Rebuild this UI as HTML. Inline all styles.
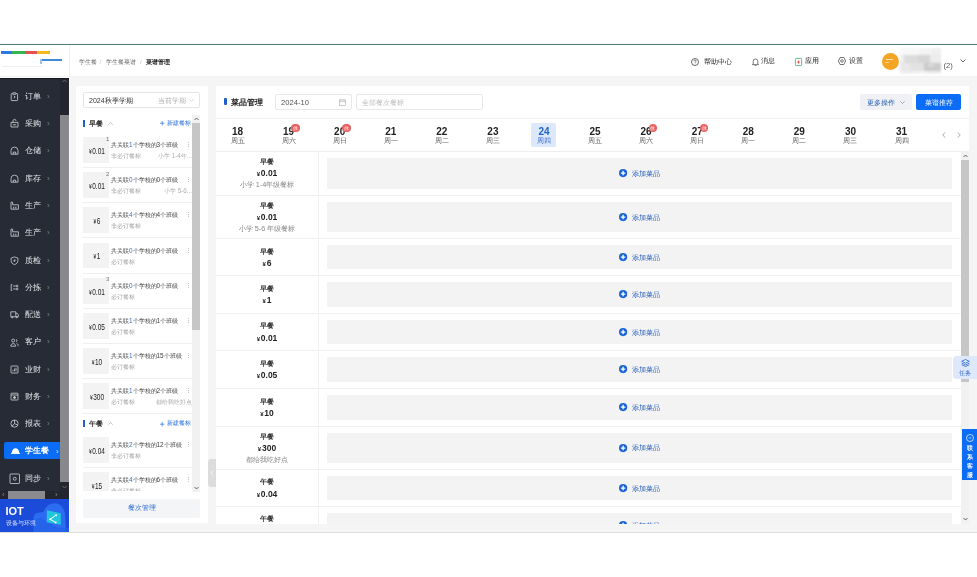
<!DOCTYPE html><html><head><meta charset="utf-8"><style>
html,body{margin:0;padding:0;}
body{width:977px;height:577px;overflow:hidden;position:relative;background:#fff;font-family:"Liberation Sans",sans-serif;}
div{box-sizing:border-box;}
svg{position:absolute;display:block;overflow:visible}
</style></head><body><div style="position:absolute;left:0;top:0;width:977px;height:577px;will-change:transform">
<div style="position:absolute;left:0px;top:44px;width:977px;height:1px;background:#587d71"></div>
<div style="position:absolute;left:0px;top:45px;width:977px;height:32px;background:#fff"></div>
<div style="position:absolute;left:69px;top:45px;width:1px;height:32px;background:#f0f0f0"></div>
<div style="position:absolute;left:0px;top:76px;width:977px;height:1px;background:#f2f2f2"></div>
<div style="position:absolute;left:1px;top:51px;width:11px;height:3px;background:#2a7ae2"></div>
<div style="position:absolute;left:12px;top:51px;width:13px;height:3px;background:#33b552"></div>
<div style="position:absolute;left:25px;top:51px;width:12px;height:3px;background:#e65050"></div>
<div style="position:absolute;left:37px;top:51px;width:13px;height:3px;background:#f2b823"></div>
<div style="position:absolute;left:40px;top:59px;width:22px;height:1.5px;background:#3f8ad8"></div>
<div style="position:absolute;left:40px;top:59px;width:1.5px;height:5px;background:#9cc3ea"></div>
<div style="position:absolute;left:2px;top:66px;width:40px;height:1px;background:#f0f0f0"></div>
<div style="position:absolute;left:79px;top:57.73px;line-height:8.54px;font-size:6.1px;color:#6e6e6e;font-weight:normal;white-space:nowrap;">学生餐</div>
<div style="position:absolute;left:99.5px;top:57.73px;line-height:8.54px;font-size:6.1px;color:#bdbdbd;font-weight:normal;white-space:nowrap;">/</div>
<div style="position:absolute;left:106.4px;top:57.73px;line-height:8.54px;font-size:6.1px;color:#6e6e6e;font-weight:normal;white-space:nowrap;">学生餐菜谱</div>
<div style="position:absolute;left:140px;top:57.73px;line-height:8.54px;font-size:6.1px;color:#bdbdbd;font-weight:normal;white-space:nowrap;">/</div>
<div style="position:absolute;left:145.7px;top:57.73px;line-height:8.54px;font-size:6.1px;color:#1a1a1a;font-weight:bold;white-space:nowrap;">菜谱管理</div>
<svg style="left:691px;top:57.5px" width="8" height="8" viewBox="0 0 8 8"><circle cx="4" cy="4" r="3.5" fill="none" stroke="#444" stroke-width="0.8"/><path d="M2.9 3.1a1.1 1.1 0 1 1 1.5 1c-.3.1-.4.3-.4.6" fill="none" stroke="#444" stroke-width="0.7"/><circle cx="4" cy="5.8" r="0.4" fill="#444"/></svg>
<div style="position:absolute;left:703.5px;top:56.67px;line-height:9.66px;font-size:6.9px;color:#222;font-weight:normal;white-space:nowrap;">帮助中心</div>
<svg style="left:751.5px;top:57.5px" width="7" height="8" viewBox="0 0 7 8"><path d="M1.2 6V3.3a2.3 2.3 0 0 1 4.6 0V6l.8.6H.4z" fill="none" stroke="#444" stroke-width="0.7" stroke-linejoin="round"/><path d="M2.6 7.5h1.8" stroke="#444" stroke-width="0.7"/></svg>
<div style="position:absolute;left:761px;top:56.46px;line-height:10.08px;font-size:7.2px;color:#222;font-weight:normal;white-space:nowrap;">消息</div>
<svg style="left:794.5px;top:57.5px" width="7" height="8" viewBox="0 0 7 8"><rect x="0.4" y="0.4" width="6.2" height="7.2" rx="0.8" fill="none" stroke="#3aa57a" stroke-width="0.8"/><path d="M3.5 2.5v3.2M1.9 4.1h3.2" stroke="#e0463a" stroke-width="0.8"/></svg>
<div style="position:absolute;left:805.3px;top:56.53px;line-height:9.94px;font-size:7.1px;color:#222;font-weight:normal;white-space:nowrap;">应用</div>
<svg style="left:838.3px;top:57.2px" width="8" height="8" viewBox="0 0 8 8"><path d="M2.1 0.5H5.9L7.6 4 5.9 7.5H2.1L0.4 4z" fill="none" stroke="#444" stroke-width="0.75" stroke-linejoin="round"/><circle cx="4" cy="4" r="1.3" fill="none" stroke="#444" stroke-width="0.7"/></svg>
<div style="position:absolute;left:849px;top:56.46px;line-height:10.08px;font-size:7.2px;color:#222;font-weight:normal;white-space:nowrap;">设置</div>
<div style="position:absolute;left:881.5px;top:53px;width:17px;height:17px;background:#f5a524;border-radius:50%"></div>
<div style="position:absolute;left:886px;top:58.5px;width:7px;height:1px;background:#fde3b0"></div>
<div style="position:absolute;left:885px;top:62px;width:4px;height:1px;background:#fbd08a"></div>
<div style="position:absolute;left:0;top:0;width:977px;height:80px;filter:blur(1.2px)">
<div style="position:absolute;left:899.5px;top:48px;width:41.5px;height:25.5px;background:#efefef"></div>
<div style="position:absolute;left:899.5px;top:48px;width:20px;height:7px;background:#f7f7f7"></div>
<div style="position:absolute;left:920px;top:48px;width:12px;height:6px;background:#f3f3f3"></div>
<div style="position:absolute;left:904px;top:55px;width:14px;height:7.5px;background:#dcdcdc"></div>
<div style="position:absolute;left:918px;top:55px;width:12px;height:7.5px;background:#d6d6d6"></div>
<div style="position:absolute;left:930px;top:55px;width:11px;height:7.5px;background:#ececec"></div>
<div style="position:absolute;left:899.5px;top:62.5px;width:10px;height:8px;background:#e9e9e9"></div>
<div style="position:absolute;left:909.5px;top:62.5px;width:14px;height:8px;background:#e2e2e2"></div>
<div style="position:absolute;left:923.5px;top:62.5px;width:17.5px;height:8px;background:#cbcbcb"></div>
<div style="position:absolute;left:928px;top:65px;width:6px;height:1.2px;background:#f2f2f2"></div>
<div style="position:absolute;left:913px;top:70.5px;width:14px;height:3px;background:#f4f4f4"></div>
</div>
<div style="position:absolute;left:943.5px;top:61.18px;line-height:10.64px;font-size:7.6px;color:#555;font-weight:normal;white-space:nowrap;">(2)</div>
<svg style="left:959.5px;top:59px" width="6" height="4" viewBox="0 0 6 4"><path d="M0.5 0.5L3 3 5.5 0.5" fill="none" stroke="#444" stroke-width="0.8"/></svg>
<div style="position:absolute;left:69px;top:77px;width:908px;height:455px;background:#f5f5f5"></div>
<div style="position:absolute;left:69px;top:77px;width:1px;height:455px;background:#fbfbfb"></div>
<div style="position:absolute;left:0px;top:532px;width:977px;height:1px;background:#dedede"></div>
<div style="position:absolute;left:0px;top:78px;width:69px;height:421px;background:#272b36"></div>
<div style="position:absolute;left:0px;top:78px;width:69px;height:1px;background:#16181e"></div>
<svg style="left:10px;top:91.8px" width="9" height="9" viewBox="0 0 9 9"><g fill="none" stroke="#d2d3d7" stroke-width="0.8" stroke-linejoin="round"><path d="M2.7 1.6H1.9a.7.7 0 0 0-.7.7v5.6a.7.7 0 0 0 .7.7h5a.7.7 0 0 0 .7-.7V2.3a.7.7 0 0 0-.7-.7H6.1"/><rect x="2.7" y="0.8" width="3.4" height="1.5" rx=".3"/><path d="M3.8 3.9l1.4 1.1-1.4 1.1"/></g></svg>
<div style="position:absolute;left:25px;top:90.70px;line-height:11.20px;font-size:8px;color:#e4e5e8;font-weight:normal;white-space:nowrap;">订单</div>
<div style="position:absolute;left:47px;top:90.70px;line-height:11.20px;font-size:8px;color:#7d8088;font-weight:normal;white-space:nowrap;">›</div>
<svg style="left:10px;top:119.1px" width="9" height="9" viewBox="0 0 9 9"><g fill="none" stroke="#d2d3d7" stroke-width="0.8" stroke-linejoin="round"><path d="M3 3.2V1.9a1.5 1.5 0 0 1 3 0"/><path d="M1 3.4h7v4.6H1z"/><path d="M2.8 5.8h3.4"/></g></svg>
<div style="position:absolute;left:25px;top:118.00px;line-height:11.20px;font-size:8px;color:#e4e5e8;font-weight:normal;white-space:nowrap;">采购</div>
<div style="position:absolute;left:47px;top:118.00px;line-height:11.20px;font-size:8px;color:#7d8088;font-weight:normal;white-space:nowrap;">›</div>
<svg style="left:10px;top:146.4px" width="9" height="9" viewBox="0 0 9 9"><g fill="none" stroke="#d2d3d7" stroke-width="0.8" stroke-linejoin="round"><path d="M1 8.2V4.6a3.5 3.5 0 0 1 7 0v3.6z"/><path d="M3.3 8.2V6.1h2.4v2.1"/></g></svg>
<div style="position:absolute;left:25px;top:145.30px;line-height:11.20px;font-size:8px;color:#e4e5e8;font-weight:normal;white-space:nowrap;">仓储</div>
<div style="position:absolute;left:47px;top:145.30px;line-height:11.20px;font-size:8px;color:#7d8088;font-weight:normal;white-space:nowrap;">›</div>
<svg style="left:10px;top:173.7px" width="9" height="9" viewBox="0 0 9 9"><g fill="none" stroke="#d2d3d7" stroke-width="0.8" stroke-linejoin="round"><path d="M1 8.2V4.6a3.5 3.5 0 0 1 7 0v3.6z"/><path d="M3.3 8.2V6.1h2.4v2.1"/></g></svg>
<div style="position:absolute;left:25px;top:172.60px;line-height:11.20px;font-size:8px;color:#e4e5e8;font-weight:normal;white-space:nowrap;">库存</div>
<div style="position:absolute;left:47px;top:172.60px;line-height:11.20px;font-size:8px;color:#7d8088;font-weight:normal;white-space:nowrap;">›</div>
<svg style="left:10px;top:201.0px" width="9" height="9" viewBox="0 0 9 9"><g fill="none" stroke="#d2d3d7" stroke-width="0.8" stroke-linejoin="round"><path d="M1 8.2V1.2h1.6v2.6h5.8v4.4z"/><path d="M3 6.2h1.2M5.2 6.2h1.2M3 7h1.2M5.2 7h1.2"/></g></svg>
<div style="position:absolute;left:25px;top:199.90px;line-height:11.20px;font-size:8px;color:#e4e5e8;font-weight:normal;white-space:nowrap;">生产</div>
<div style="position:absolute;left:47px;top:199.90px;line-height:11.20px;font-size:8px;color:#7d8088;font-weight:normal;white-space:nowrap;">›</div>
<svg style="left:10px;top:228.3px" width="9" height="9" viewBox="0 0 9 9"><g fill="none" stroke="#d2d3d7" stroke-width="0.8" stroke-linejoin="round"><path d="M1 8.2V1.2h1.6v2.6h5.8v4.4z"/><path d="M3 6.2h1.2M5.2 6.2h1.2M3 7h1.2M5.2 7h1.2"/></g></svg>
<div style="position:absolute;left:25px;top:227.20px;line-height:11.20px;font-size:8px;color:#e4e5e8;font-weight:normal;white-space:nowrap;">生产</div>
<div style="position:absolute;left:47px;top:227.20px;line-height:11.20px;font-size:8px;color:#7d8088;font-weight:normal;white-space:nowrap;">›</div>
<svg style="left:10px;top:255.6px" width="9" height="9" viewBox="0 0 9 9"><g fill="none" stroke="#d2d3d7" stroke-width="0.8" stroke-linejoin="round"><path d="M4.5 0.9L7.9 2.1v2.5c0 2.2-1.5 3.4-3.4 4C2.6 8 1.1 6.8 1.1 4.6V2.1z"/><path d="M5.2 3.2L3.8 4.6h1.4L3.8 6"/></g></svg>
<div style="position:absolute;left:25px;top:254.50px;line-height:11.20px;font-size:8px;color:#e4e5e8;font-weight:normal;white-space:nowrap;">质检</div>
<div style="position:absolute;left:47px;top:254.50px;line-height:11.20px;font-size:8px;color:#7d8088;font-weight:normal;white-space:nowrap;">›</div>
<svg style="left:10px;top:282.9px" width="9" height="9" viewBox="0 0 9 9"><g fill="none" stroke="#d2d3d7" stroke-width="0.8" stroke-linejoin="round"><path d="M2.2 1.5H1.2v6h1"/><path d="M3 3h2.8M3 6h2.8"/><circle cx="7.1" cy="3" r=".9"/><circle cx="7.1" cy="6" r=".9"/></g></svg>
<div style="position:absolute;left:25px;top:281.80px;line-height:11.20px;font-size:8px;color:#e4e5e8;font-weight:normal;white-space:nowrap;">分拣</div>
<div style="position:absolute;left:47px;top:281.80px;line-height:11.20px;font-size:8px;color:#7d8088;font-weight:normal;white-space:nowrap;">›</div>
<svg style="left:10px;top:310.2px" width="9" height="9" viewBox="0 0 9 9"><g fill="none" stroke="#d2d3d7" stroke-width="0.8" stroke-linejoin="round"><path d="M0.8 1.8h5v5H0.8z"/><path d="M5.8 3.4h1.5l1 1.4v2H5.8"/><circle cx="2.3" cy="7.3" r=".6"/><circle cx="6.8" cy="7.3" r=".6"/></g></svg>
<div style="position:absolute;left:25px;top:309.10px;line-height:11.20px;font-size:8px;color:#e4e5e8;font-weight:normal;white-space:nowrap;">配送</div>
<div style="position:absolute;left:47px;top:309.10px;line-height:11.20px;font-size:8px;color:#7d8088;font-weight:normal;white-space:nowrap;">›</div>
<svg style="left:10px;top:337.5px" width="9" height="9" viewBox="0 0 9 9"><g fill="none" stroke="#d2d3d7" stroke-width="0.8" stroke-linejoin="round"><circle cx="3.2" cy="2.6" r="1.5"/><path d="M0.8 8.2c0-1.6 1-2.6 2.4-2.6s2.4 1 2.4 2.6z"/><path d="M6 1.3a1.4 1.4 0 0 1 0 2.6M6.6 5.4c1 .3 1.6 1.2 1.6 2.8"/></g></svg>
<div style="position:absolute;left:25px;top:336.40px;line-height:11.20px;font-size:8px;color:#e4e5e8;font-weight:normal;white-space:nowrap;">客户</div>
<div style="position:absolute;left:47px;top:336.40px;line-height:11.20px;font-size:8px;color:#7d8088;font-weight:normal;white-space:nowrap;">›</div>
<svg style="left:10px;top:364.8px" width="9" height="9" viewBox="0 0 9 9"><g fill="none" stroke="#d2d3d7" stroke-width="0.8" stroke-linejoin="round"><rect x="1" y="1" width="7" height="7" rx=".6"/><path d="M3 6.3V5M4.5 6.3V3.6M6 6.3V2.7"/></g></svg>
<div style="position:absolute;left:25px;top:363.70px;line-height:11.20px;font-size:8px;color:#e4e5e8;font-weight:normal;white-space:nowrap;">业财</div>
<div style="position:absolute;left:47px;top:363.70px;line-height:11.20px;font-size:8px;color:#7d8088;font-weight:normal;white-space:nowrap;">›</div>
<svg style="left:10px;top:392.1px" width="9" height="9" viewBox="0 0 9 9"><g fill="none" stroke="#d2d3d7" stroke-width="0.8" stroke-linejoin="round"><rect x="1" y="1.2" width="7" height="6.8" rx=".6"/><path d="M1 3h7"/><circle cx="4.5" cy="5.5" r="1" fill="#d2d3d7"/></g></svg>
<div style="position:absolute;left:25px;top:391.00px;line-height:11.20px;font-size:8px;color:#e4e5e8;font-weight:normal;white-space:nowrap;">财务</div>
<div style="position:absolute;left:47px;top:391.00px;line-height:11.20px;font-size:8px;color:#7d8088;font-weight:normal;white-space:nowrap;">›</div>
<svg style="left:10px;top:419.4px" width="9" height="9" viewBox="0 0 9 9"><g fill="none" stroke="#d2d3d7" stroke-width="0.8" stroke-linejoin="round"><circle cx="4.5" cy="4.6" r="3.6"/><path d="M4.5 1v3.6L2 7.2M4.5 4.6L7.6 6"/></g></svg>
<div style="position:absolute;left:25px;top:418.30px;line-height:11.20px;font-size:8px;color:#e4e5e8;font-weight:normal;white-space:nowrap;">报表</div>
<div style="position:absolute;left:47px;top:418.30px;line-height:11.20px;font-size:8px;color:#7d8088;font-weight:normal;white-space:nowrap;">›</div>
<div style="position:absolute;left:3.5px;top:441.90000000000003px;width:57px;height:17.3px;background:#0b6cf6;border-radius:2px"></div>
<svg style="left:10.5px;top:447.2px" width="9" height="7" viewBox="0 0 9 7"><path d="M0.8 6.2C0.8 3 2.6 1.3 4.5 1.3S8.2 3 8.2 6.2z" fill="#fff"/><rect x="0" y="5.8" width="9" height="1.1" fill="#fff"/></svg>
<div style="position:absolute;left:25px;top:445.39px;line-height:11.62px;font-size:8.3px;color:#fff;font-weight:bold;white-space:nowrap;">学生餐</div>
<div style="position:absolute;left:56px;top:445.60px;line-height:11.20px;font-size:8px;color:#d8e6ff;font-weight:normal;white-space:nowrap;">›</div>
<svg style="left:10px;top:474.0px" width="9" height="9" viewBox="0 0 9 9"><g fill="none" stroke="#d2d3d7" stroke-width="0.8" stroke-linejoin="round"><rect x="0" y="0" width="9.5" height="9.5" rx=".7"/><circle cx="4.75" cy="4.75" r="1.5"/></g></svg>
<div style="position:absolute;left:25px;top:472.90px;line-height:11.20px;font-size:8px;color:#e4e5e8;font-weight:normal;white-space:nowrap;">同步</div>
<div style="position:absolute;left:47px;top:472.90px;line-height:11.20px;font-size:8px;color:#7d8088;font-weight:normal;white-space:nowrap;">›</div>
<div style="position:absolute;left:60px;top:79px;width:9px;height:403px;background:#23262e"></div>
<div style="position:absolute;left:60px;top:114.5px;width:9px;height:367px;background:#88898d"></div>
<svg style="left:62px;top:79px" width="5" height="4" viewBox="0 0 5 4"><path d="M0.5 3L2.5 1 4.5 3" fill="none" stroke="#777" stroke-width="0.8"/></svg>
<div style="position:absolute;left:60px;top:482px;width:9px;height:9px;background:#23262e"></div>
<svg style="left:62px;top:485px" width="5" height="4" viewBox="0 0 5 4"><path d="M0.5 1L2.5 3 4.5 1" fill="none" stroke="#777" stroke-width="0.8"/></svg>
<div style="position:absolute;left:0px;top:491px;width:69px;height:8px;background:#23262e"></div>
<div style="position:absolute;left:8px;top:491px;width:37px;height:8px;background:#8a8b8f"></div>
<div style="position:absolute;left:2px;top:489.40px;line-height:11.20px;font-size:8px;color:#888;font-weight:normal;white-space:nowrap;">‹</div>
<div style="position:absolute;left:55px;top:489.40px;line-height:11.20px;font-size:8px;color:#888;font-weight:normal;white-space:nowrap;">›</div>
<div style="position:absolute;left:0px;top:499px;width:69px;height:33px;background:#1b4bd9"></div>
<svg style="left:28px;top:498px" width="41" height="34" viewBox="0 0 41 34"><path d="M5.5 34V19Q6 15.5 10 14.8L15.5 14Q17.5 8 22.5 6Q28.5 4 32.5 7.2Q36.5 10.5 37 16.5L38 34Z" fill="#2c6cf0"/><path d="M5.5 34V22L14 19L18 24L30 30L41 30V34Z" fill="#2460e8" opacity="0.7"/><path d="M18.8 12.2L32.8 15.2V26.8L18.8 24.2Z" fill="#22c6dc"/><path d="M28 17.2L22.2 21.2L27.6 24.4" fill="none" stroke="#fff" stroke-width="1"/><circle cx="28" cy="17.2" r="1" fill="#fff"/><circle cx="22.2" cy="21.2" r="1" fill="#fff"/><circle cx="27.6" cy="24.4" r="1" fill="#fff"/></svg>
<div style="position:absolute;left:5.5px;top:503.80px;line-height:15.40px;font-size:11px;color:#fff;font-weight:bold;white-space:nowrap;">IOT</div>
<div style="position:absolute;left:5.5px;top:519.20px;line-height:8.40px;font-size:6px;color:#d7e2ff;font-weight:normal;white-space:nowrap;">设备与环境</div>
<div style="position:absolute;left:76px;top:86px;width:132px;height:437px;background:#fff;border-radius:2px"></div>
<div style="position:absolute;left:83px;top:92px;width:117px;height:15.5px;border:1px solid #e4e4e4;border-radius:2px;background:#fff"></div>
<div style="position:absolute;left:89px;top:95.80px;line-height:9.80px;font-size:7px;color:#333;font-weight:normal;white-space:nowrap;">2024秋季学期</div>
<div style="position:absolute;left:158px;top:96.08px;line-height:9.24px;font-size:6.6px;color:#b5b5b5;font-weight:normal;white-space:nowrap;">当前学期</div>
<svg style="left:189px;top:99px" width="5" height="3" viewBox="0 0 5 3"><path d="M0.3 0.3L2.5 2.5 4.7 0.3" fill="none" stroke="#c0c0c0" stroke-width="0.6"/></svg>
<div style="position:absolute;left:83px;top:120.0px;width:1.8px;height:7px;background:#1f5fc7"></div>
<div style="position:absolute;left:89px;top:118.60px;line-height:9.80px;font-size:7px;color:#333;font-weight:bold;white-space:nowrap;">早餐</div>
<svg style="left:107.6px;top:121.7px" width="5" height="3" viewBox="0 0 5 3"><path d="M0.3 2.7L2.5 0.5 4.7 2.7" fill="none" stroke="#999" stroke-width="0.6"/></svg>
<svg style="left:159.8px;top:121.3px" width="4.4" height="4.4" viewBox="0 0 4.4 4.4"><path d="M2.2 0v4.4M0 2.2h4.4" stroke="#2a6fd6" stroke-width="0.7"/></svg>
<div style="position:absolute;left:166.5px;top:119.12px;line-height:8.75px;font-size:6.25px;color:#2a6fd6;font-weight:normal;white-space:nowrap;">新建餐标</div>
<div style="position:absolute;left:83px;top:420.3px;width:1.8px;height:7px;background:#1f5fc7"></div>
<div style="position:absolute;left:89px;top:418.90px;line-height:9.80px;font-size:7px;color:#333;font-weight:bold;white-space:nowrap;">午餐</div>
<svg style="left:107.6px;top:422.0px" width="5" height="3" viewBox="0 0 5 3"><path d="M0.3 2.7L2.5 0.5 4.7 2.7" fill="none" stroke="#999" stroke-width="0.6"/></svg>
<svg style="left:159.8px;top:421.6px" width="4.4" height="4.4" viewBox="0 0 4.4 4.4"><path d="M2.2 0v4.4M0 2.2h4.4" stroke="#2a6fd6" stroke-width="0.7"/></svg>
<div style="position:absolute;left:166.5px;top:419.43px;line-height:8.75px;font-size:6.25px;color:#2a6fd6;font-weight:normal;white-space:nowrap;">新建餐标</div>
<div style="position:absolute;left:76px;top:114px;width:132px;height:377px;overflow:hidden">
<div style="position:absolute;left:7px;top:23.2px;width:26px;height:25.8px;background:#f3f3f3"></div>
<div style="position:absolute;left:7.8px;width:26px;top:28.0px;line-height:14px;text-align:center;white-space:nowrap;color:#222;transform:scaleX(0.74)"><span style="font-size:6.6px;margin-right:0.6px">¥</span><span style="font-size:8.8px">0.01</span></div>
<div style="position:absolute;left:30px;top:21.7px;line-height:6px;font-size:6px;color:#777">1</div>
<div style="position:absolute;left:35px;top:27.2px;line-height:8px;font-size:6.4px;color:#3c3c3c;white-space:nowrap">共关联<span style="color:#2f6fd0">1</span>个学校的3个班级</div>
<div style="position:absolute;left:35px;top:38.2px;line-height:8px;font-size:6.3px;color:#a6a6a6;white-space:nowrap">非必订餐标</div>
<div style="position:absolute;right:16px;top:38.2px;line-height:8px;font-size:6.3px;color:#b0b0b0;white-space:nowrap">小学 1-4年...</div>
<div style="position:absolute;left:111.8px;top:28.2px;width:1px;height:1px;background:#c4c4c4;box-shadow:0 2px #c4c4c4,0 4px #c4c4c4"></div>
<div style="position:absolute;left:7px;top:53.2px;width:109px;height:1px;background:#efefef"></div>
<div style="position:absolute;left:7px;top:58.3px;width:26px;height:25.8px;background:#f3f3f3"></div>
<div style="position:absolute;left:7.8px;width:26px;top:63.1px;line-height:14px;text-align:center;white-space:nowrap;color:#222;transform:scaleX(0.74)"><span style="font-size:6.6px;margin-right:0.6px">¥</span><span style="font-size:8.8px">0.01</span></div>
<div style="position:absolute;left:30px;top:56.8px;line-height:6px;font-size:6px;color:#777">2</div>
<div style="position:absolute;left:35px;top:62.3px;line-height:8px;font-size:6.4px;color:#3c3c3c;white-space:nowrap">共关联<span style="color:#2f6fd0">0</span>个学校的0个班级</div>
<div style="position:absolute;left:35px;top:73.3px;line-height:8px;font-size:6.3px;color:#a6a6a6;white-space:nowrap">非必订餐标</div>
<div style="position:absolute;right:16px;top:73.3px;line-height:8px;font-size:6.3px;color:#b0b0b0;white-space:nowrap">小学 5-6...</div>
<div style="position:absolute;left:111.8px;top:63.3px;width:1px;height:1px;background:#c4c4c4;box-shadow:0 2px #c4c4c4,0 4px #c4c4c4"></div>
<div style="position:absolute;left:7px;top:88.3px;width:109px;height:1px;background:#efefef"></div>
<div style="position:absolute;left:7px;top:93.4px;width:26px;height:25.8px;background:#f3f3f3"></div>
<div style="position:absolute;left:7.8px;width:26px;top:98.2px;line-height:14px;text-align:center;white-space:nowrap;color:#222;transform:scaleX(0.74)"><span style="font-size:6.6px;margin-right:0.6px">¥</span><span style="font-size:8.8px">6</span></div>
<div style="position:absolute;left:35px;top:97.4px;line-height:8px;font-size:6.4px;color:#3c3c3c;white-space:nowrap">共关联<span style="color:#2f6fd0">4</span>个学校的4个班级</div>
<div style="position:absolute;left:35px;top:108.4px;line-height:8px;font-size:6.3px;color:#a6a6a6;white-space:nowrap">非必订餐标</div>
<div style="position:absolute;left:111.8px;top:98.4px;width:1px;height:1px;background:#c4c4c4;box-shadow:0 2px #c4c4c4,0 4px #c4c4c4"></div>
<div style="position:absolute;left:7px;top:123.4px;width:109px;height:1px;background:#efefef"></div>
<div style="position:absolute;left:7px;top:128.5px;width:26px;height:25.8px;background:#f3f3f3"></div>
<div style="position:absolute;left:7.8px;width:26px;top:133.3px;line-height:14px;text-align:center;white-space:nowrap;color:#222;transform:scaleX(0.74)"><span style="font-size:6.6px;margin-right:0.6px">¥</span><span style="font-size:8.8px">1</span></div>
<div style="position:absolute;left:35px;top:132.5px;line-height:8px;font-size:6.4px;color:#3c3c3c;white-space:nowrap">共关联<span style="color:#2f6fd0">0</span>个学校的0个班级</div>
<div style="position:absolute;left:35px;top:143.5px;line-height:8px;font-size:6.3px;color:#a6a6a6;white-space:nowrap">必订餐标</div>
<div style="position:absolute;left:111.8px;top:133.5px;width:1px;height:1px;background:#c4c4c4;box-shadow:0 2px #c4c4c4,0 4px #c4c4c4"></div>
<div style="position:absolute;left:7px;top:158.5px;width:109px;height:1px;background:#efefef"></div>
<div style="position:absolute;left:7px;top:163.8px;width:26px;height:25.8px;background:#f3f3f3"></div>
<div style="position:absolute;left:7.8px;width:26px;top:168.6px;line-height:14px;text-align:center;white-space:nowrap;color:#222;transform:scaleX(0.74)"><span style="font-size:6.6px;margin-right:0.6px">¥</span><span style="font-size:8.8px">0.01</span></div>
<div style="position:absolute;left:30px;top:162.3px;line-height:6px;font-size:6px;color:#777">3</div>
<div style="position:absolute;left:35px;top:167.8px;line-height:8px;font-size:6.4px;color:#3c3c3c;white-space:nowrap">共关联<span style="color:#2f6fd0">0</span>个学校的0个班级</div>
<div style="position:absolute;left:35px;top:178.8px;line-height:8px;font-size:6.3px;color:#a6a6a6;white-space:nowrap">必订餐标</div>
<div style="position:absolute;left:111.8px;top:168.8px;width:1px;height:1px;background:#c4c4c4;box-shadow:0 2px #c4c4c4,0 4px #c4c4c4"></div>
<div style="position:absolute;left:7px;top:193.8px;width:109px;height:1px;background:#efefef"></div>
<div style="position:absolute;left:7px;top:199.0px;width:26px;height:25.8px;background:#f3f3f3"></div>
<div style="position:absolute;left:7.8px;width:26px;top:203.8px;line-height:14px;text-align:center;white-space:nowrap;color:#222;transform:scaleX(0.74)"><span style="font-size:6.6px;margin-right:0.6px">¥</span><span style="font-size:8.8px">0.05</span></div>
<div style="position:absolute;left:35px;top:203.0px;line-height:8px;font-size:6.4px;color:#3c3c3c;white-space:nowrap">共关联<span style="color:#2f6fd0">1</span>个学校的1个班级</div>
<div style="position:absolute;left:35px;top:214.0px;line-height:8px;font-size:6.3px;color:#a6a6a6;white-space:nowrap">必订餐标</div>
<div style="position:absolute;left:111.8px;top:204.0px;width:1px;height:1px;background:#c4c4c4;box-shadow:0 2px #c4c4c4,0 4px #c4c4c4"></div>
<div style="position:absolute;left:7px;top:229.0px;width:109px;height:1px;background:#efefef"></div>
<div style="position:absolute;left:7px;top:234.1px;width:26px;height:25.8px;background:#f3f3f3"></div>
<div style="position:absolute;left:7.8px;width:26px;top:238.9px;line-height:14px;text-align:center;white-space:nowrap;color:#222;transform:scaleX(0.74)"><span style="font-size:6.6px;margin-right:0.6px">¥</span><span style="font-size:8.8px">10</span></div>
<div style="position:absolute;left:35px;top:238.1px;line-height:8px;font-size:6.4px;color:#3c3c3c;white-space:nowrap">共关联<span style="color:#2f6fd0">1</span>个学校的15个班级</div>
<div style="position:absolute;left:35px;top:249.1px;line-height:8px;font-size:6.3px;color:#a6a6a6;white-space:nowrap">必订餐标</div>
<div style="position:absolute;left:111.8px;top:239.1px;width:1px;height:1px;background:#c4c4c4;box-shadow:0 2px #c4c4c4,0 4px #c4c4c4"></div>
<div style="position:absolute;left:7px;top:264.1px;width:109px;height:1px;background:#efefef"></div>
<div style="position:absolute;left:7px;top:269.2px;width:26px;height:25.8px;background:#f3f3f3"></div>
<div style="position:absolute;left:7.8px;width:26px;top:274.0px;line-height:14px;text-align:center;white-space:nowrap;color:#222;transform:scaleX(0.74)"><span style="font-size:6.6px;margin-right:0.6px">¥</span><span style="font-size:8.8px">300</span></div>
<div style="position:absolute;left:35px;top:273.2px;line-height:8px;font-size:6.4px;color:#3c3c3c;white-space:nowrap">共关联<span style="color:#2f6fd0">1</span>个学校的2个班级</div>
<div style="position:absolute;left:35px;top:284.2px;line-height:8px;font-size:6.3px;color:#a6a6a6;white-space:nowrap">必订餐标</div>
<div style="position:absolute;right:16px;top:284.2px;line-height:8px;font-size:6.3px;color:#b0b0b0;white-space:nowrap">都给我吃好点</div>
<div style="position:absolute;left:111.8px;top:274.2px;width:1px;height:1px;background:#c4c4c4;box-shadow:0 2px #c4c4c4,0 4px #c4c4c4"></div>
<div style="position:absolute;left:7px;top:299.2px;width:109px;height:1px;background:#efefef"></div>
<div style="position:absolute;left:7px;top:323.0px;width:26px;height:25.8px;background:#f3f3f3"></div>
<div style="position:absolute;left:7.8px;width:26px;top:327.8px;line-height:14px;text-align:center;white-space:nowrap;color:#222;transform:scaleX(0.74)"><span style="font-size:6.6px;margin-right:0.6px">¥</span><span style="font-size:8.8px">0.04</span></div>
<div style="position:absolute;left:35px;top:327.0px;line-height:8px;font-size:6.4px;color:#3c3c3c;white-space:nowrap">共关联<span style="color:#2f6fd0">2</span>个学校的12个班级</div>
<div style="position:absolute;left:35px;top:338.0px;line-height:8px;font-size:6.3px;color:#a6a6a6;white-space:nowrap">非必订餐标</div>
<div style="position:absolute;left:111.8px;top:328.0px;width:1px;height:1px;background:#c4c4c4;box-shadow:0 2px #c4c4c4,0 4px #c4c4c4"></div>
<div style="position:absolute;left:7px;top:353.0px;width:109px;height:1px;background:#efefef"></div>
<div style="position:absolute;left:7px;top:358.1px;width:26px;height:25.8px;background:#f3f3f3"></div>
<div style="position:absolute;left:7.8px;width:26px;top:362.9px;line-height:14px;text-align:center;white-space:nowrap;color:#222;transform:scaleX(0.74)"><span style="font-size:6.6px;margin-right:0.6px">¥</span><span style="font-size:8.8px">15</span></div>
<div style="position:absolute;left:35px;top:362.1px;line-height:8px;font-size:6.4px;color:#3c3c3c;white-space:nowrap">共关联<span style="color:#2f6fd0">4</span>个学校的6个班级</div>
<div style="position:absolute;left:35px;top:373.1px;line-height:8px;font-size:6.3px;color:#a6a6a6;white-space:nowrap">非必订餐标</div>
<div style="position:absolute;left:111.8px;top:363.1px;width:1px;height:1px;background:#c4c4c4;box-shadow:0 2px #c4c4c4,0 4px #c4c4c4"></div>
<div style="position:absolute;left:7px;top:388.1px;width:109px;height:1px;background:#efefef"></div>
</div>
<div style="position:absolute;left:192px;top:114.5px;width:8px;height:377px;background:#f1f1f1"></div>
<div style="position:absolute;left:192px;top:123px;width:8px;height:207px;background:#c6c6c6"></div>
<svg style="left:193.5px;top:116.5px" width="5" height="4" viewBox="0 0 5 4"><path d="M0.5 3L2.5 1 4.5 3" fill="none" stroke="#555" stroke-width="0.9"/></svg>
<svg style="left:193.5px;top:486px" width="5" height="4" viewBox="0 0 5 4"><path d="M0.5 1L2.5 3 4.5 1" fill="none" stroke="#555" stroke-width="0.9"/></svg>
<div style="position:absolute;left:83px;top:499px;width:117px;height:18.7px;background:#f4f5f7;border-radius:2px"></div>
<div style="position:absolute;left:-58.5px;width:400px;text-align:center;top:503.40px;line-height:9.80px;font-size:7px;color:#2a6fd6;font-weight:normal;white-space:nowrap;">餐次管理</div>
<div style="position:absolute;left:208px;top:459px;width:8px;height:27.5px;background:#dcdcdc;border-radius:3px 0 0 3px"></div>
<svg style="left:210px;top:469.5px" width="4" height="6" viewBox="0 0 4 6"><path d="M3 0.5L1 3 3 5.5" fill="none" stroke="#fff" stroke-width="0.8"/></svg>
<div style="position:absolute;left:216px;top:86px;width:753px;height:438px;background:#fff"></div>
<div style="position:absolute;left:224.4px;top:97.8px;width:2.6px;height:7.2px;background:#1f5fc7;border-radius:1px"></div>
<div style="position:absolute;left:230.5px;top:97.06px;line-height:11.48px;font-size:8.2px;color:#222;font-weight:bold;white-space:nowrap;">菜品管理</div>
<div style="position:absolute;left:275px;top:94.3px;width:76.5px;height:16.2px;border:1px solid #e8e8e8;border-radius:2px"></div>
<div style="position:absolute;left:281px;top:97.68px;line-height:10.64px;font-size:7.6px;color:#555;font-weight:normal;white-space:nowrap;">2024-10</div>
<svg style="left:338.5px;top:98.5px" width="7" height="7" viewBox="0 0 7 7"><rect x="0.4" y="1" width="6.2" height="5.6" fill="none" stroke="#aaa" stroke-width="0.6"/><path d="M0.4 2.6h6.2M2 0v1.4M5 0v1.4" stroke="#aaa" stroke-width="0.6"/></svg>
<div style="position:absolute;left:355.6px;top:94.3px;width:127.2px;height:16.2px;border:1px solid #e8e8e8;border-radius:2px"></div>
<div style="position:absolute;left:362px;top:97.64px;line-height:9.52px;font-size:6.8px;color:#bcbcbc;font-weight:normal;white-space:nowrap;">全部餐次餐标</div>
<div style="position:absolute;left:859.6px;top:94.1px;width:52.5px;height:15.5px;background:#eff1f4;border-radius:2px"></div>
<div style="position:absolute;left:867px;top:97.50px;line-height:9.80px;font-size:7px;color:#215aab;font-weight:normal;white-space:nowrap;">更多操作</div>
<svg style="left:900px;top:101px" width="5" height="3" viewBox="0 0 5 3"><path d="M0.3 0.3L2.5 2.5 4.7 0.3" fill="none" stroke="#7b8ba8" stroke-width="0.7"/></svg>
<div style="position:absolute;left:916.4px;top:94.1px;width:44.6px;height:15.8px;background:#0b6cf6;border-radius:2px"></div>
<div style="position:absolute;left:738.7px;width:400px;text-align:center;top:97.60px;line-height:9.80px;font-size:7px;color:#fff;font-weight:normal;white-space:nowrap;">菜谱推荐</div>
<div style="position:absolute;left:216px;top:118px;width:753px;height:1px;background:#efefef"></div>
<div style="position:absolute;left:37.5px;width:400px;text-align:center;top:124.80px;line-height:14.00px;font-size:10px;color:#222;font-weight:bold;white-space:nowrap;">18</div>
<div style="position:absolute;left:37.5px;width:400px;text-align:center;top:135.95px;line-height:9.10px;font-size:6.5px;color:#666;font-weight:normal;white-space:nowrap;">周五</div>
<div style="position:absolute;left:88.57999999999998px;width:400px;text-align:center;top:124.80px;line-height:14.00px;font-size:10px;color:#222;font-weight:bold;white-space:nowrap;">19</div>
<div style="position:absolute;left:88.57999999999998px;width:400px;text-align:center;top:135.95px;line-height:9.10px;font-size:6.5px;color:#666;font-weight:normal;white-space:nowrap;">周六</div>
<div style="position:absolute;left:291.08px;top:123.6px;width:8.6px;height:8.6px;border-radius:50%;background:#e8625f;color:#fff;font-size:5px;line-height:8px;text-align:center">休</div>
<div style="position:absolute;left:139.65999999999997px;width:400px;text-align:center;top:124.80px;line-height:14.00px;font-size:10px;color:#222;font-weight:bold;white-space:nowrap;">20</div>
<div style="position:absolute;left:139.65999999999997px;width:400px;text-align:center;top:135.95px;line-height:9.10px;font-size:6.5px;color:#666;font-weight:normal;white-space:nowrap;">周日</div>
<div style="position:absolute;left:342.15999999999997px;top:123.6px;width:8.6px;height:8.6px;border-radius:50%;background:#e8625f;color:#fff;font-size:5px;line-height:8px;text-align:center">休</div>
<div style="position:absolute;left:190.74px;width:400px;text-align:center;top:124.80px;line-height:14.00px;font-size:10px;color:#222;font-weight:bold;white-space:nowrap;">21</div>
<div style="position:absolute;left:190.74px;width:400px;text-align:center;top:135.95px;line-height:9.10px;font-size:6.5px;color:#666;font-weight:normal;white-space:nowrap;">周一</div>
<div style="position:absolute;left:241.82px;width:400px;text-align:center;top:124.80px;line-height:14.00px;font-size:10px;color:#222;font-weight:bold;white-space:nowrap;">22</div>
<div style="position:absolute;left:241.82px;width:400px;text-align:center;top:135.95px;line-height:9.10px;font-size:6.5px;color:#666;font-weight:normal;white-space:nowrap;">周二</div>
<div style="position:absolute;left:292.9px;width:400px;text-align:center;top:124.80px;line-height:14.00px;font-size:10px;color:#222;font-weight:bold;white-space:nowrap;">23</div>
<div style="position:absolute;left:292.9px;width:400px;text-align:center;top:135.95px;line-height:9.10px;font-size:6.5px;color:#666;font-weight:normal;white-space:nowrap;">周三</div>
<div style="position:absolute;left:531.2px;top:123.2px;width:24.5px;height:24px;background:#dde8fa;border-radius:2px"></div>
<div style="position:absolute;left:343.98px;width:400px;text-align:center;top:124.80px;line-height:14.00px;font-size:10px;color:#1e63d0;font-weight:bold;white-space:nowrap;">24</div>
<div style="position:absolute;left:343.98px;width:400px;text-align:center;top:135.95px;line-height:9.10px;font-size:6.5px;color:#3b74d4;font-weight:normal;white-space:nowrap;">周四</div>
<div style="position:absolute;left:395.05999999999995px;width:400px;text-align:center;top:124.80px;line-height:14.00px;font-size:10px;color:#222;font-weight:bold;white-space:nowrap;">25</div>
<div style="position:absolute;left:395.05999999999995px;width:400px;text-align:center;top:135.95px;line-height:9.10px;font-size:6.5px;color:#666;font-weight:normal;white-space:nowrap;">周五</div>
<div style="position:absolute;left:446.14px;width:400px;text-align:center;top:124.80px;line-height:14.00px;font-size:10px;color:#222;font-weight:bold;white-space:nowrap;">26</div>
<div style="position:absolute;left:446.14px;width:400px;text-align:center;top:135.95px;line-height:9.10px;font-size:6.5px;color:#666;font-weight:normal;white-space:nowrap;">周六</div>
<div style="position:absolute;left:648.64px;top:123.6px;width:8.6px;height:8.6px;border-radius:50%;background:#e8625f;color:#fff;font-size:5px;line-height:8px;text-align:center">休</div>
<div style="position:absolute;left:497.22px;width:400px;text-align:center;top:124.80px;line-height:14.00px;font-size:10px;color:#222;font-weight:bold;white-space:nowrap;">27</div>
<div style="position:absolute;left:497.22px;width:400px;text-align:center;top:135.95px;line-height:9.10px;font-size:6.5px;color:#666;font-weight:normal;white-space:nowrap;">周日</div>
<div style="position:absolute;left:699.72px;top:123.6px;width:8.6px;height:8.6px;border-radius:50%;background:#e8625f;color:#fff;font-size:5px;line-height:8px;text-align:center">休</div>
<div style="position:absolute;left:548.3px;width:400px;text-align:center;top:124.80px;line-height:14.00px;font-size:10px;color:#222;font-weight:bold;white-space:nowrap;">28</div>
<div style="position:absolute;left:548.3px;width:400px;text-align:center;top:135.95px;line-height:9.10px;font-size:6.5px;color:#666;font-weight:normal;white-space:nowrap;">周一</div>
<div style="position:absolute;left:599.38px;width:400px;text-align:center;top:124.80px;line-height:14.00px;font-size:10px;color:#222;font-weight:bold;white-space:nowrap;">29</div>
<div style="position:absolute;left:599.38px;width:400px;text-align:center;top:135.95px;line-height:9.10px;font-size:6.5px;color:#666;font-weight:normal;white-space:nowrap;">周二</div>
<div style="position:absolute;left:650.46px;width:400px;text-align:center;top:124.80px;line-height:14.00px;font-size:10px;color:#222;font-weight:bold;white-space:nowrap;">30</div>
<div style="position:absolute;left:650.46px;width:400px;text-align:center;top:135.95px;line-height:9.10px;font-size:6.5px;color:#666;font-weight:normal;white-space:nowrap;">周三</div>
<div style="position:absolute;left:701.54px;width:400px;text-align:center;top:124.80px;line-height:14.00px;font-size:10px;color:#222;font-weight:bold;white-space:nowrap;">31</div>
<div style="position:absolute;left:701.54px;width:400px;text-align:center;top:135.95px;line-height:9.10px;font-size:6.5px;color:#666;font-weight:normal;white-space:nowrap;">周四</div>
<svg style="left:942px;top:132px" width="4" height="6" viewBox="0 0 4 6"><path d="M3.2 0.4L0.8 3 3.2 5.6" fill="none" stroke="#888" stroke-width="0.7"/></svg>
<svg style="left:956.5px;top:132px" width="4" height="6" viewBox="0 0 4 6"><path d="M0.8 0.4L3.2 3 0.8 5.6" fill="none" stroke="#888" stroke-width="0.7"/></svg>
<div style="position:absolute;left:216px;top:150.5px;width:753px;height:1px;background:#eeeeee"></div>
<div style="position:absolute;left:216px;top:151px;width:745px;height:373px;overflow:hidden">
<div style="position:absolute;left:0;top:43.9px;width:745px;height:1px;background:#f0f0f0"></div>
<div style="position:absolute;left:111px;top:6.6px;width:625px;height:31.2px;background:#f3f3f3;border-radius:1px"></div>
<div style="position:absolute;left:0;width:102px;text-align:center;top:6.0px;line-height:10px;white-space:nowrap;font-size:6.6px;color:#333;font-weight:bold">早餐</div>
<div style="position:absolute;left:0;width:102px;text-align:center;top:15.2px;line-height:10px;white-space:nowrap;color:#222;font-weight:bold"><span style="font-size:6px;margin-right:0.8px">¥</span><span style="font-size:8.5px">0.01</span></div>
<div style="position:absolute;left:0;width:102px;text-align:center;top:29.0px;line-height:10px;white-space:nowrap;font-size:7.3px;color:#888;font-weight:normal">小学 1-4年级餐标</div>
<svg style="left:403.2px;top:18.1px" width="8.2" height="8.2" viewBox="0 0 8 8"><circle cx="4" cy="4" r="4" fill="#1b63d6"/><path d="M4 1.8v4.4M1.8 4h4.4" stroke="#fff" stroke-width="1.3"/></svg>
<div style="position:absolute;left:415.5px;top:17.8px;line-height:10px;font-size:7px;color:#1e58b8;white-space:nowrap">添加菜品</div>
<div style="position:absolute;left:0;top:86.9px;width:745px;height:1px;background:#f0f0f0"></div>
<div style="position:absolute;left:111px;top:51.0px;width:625px;height:29.8px;background:#f3f3f3;border-radius:1px"></div>
<div style="position:absolute;left:0;width:102px;text-align:center;top:49.7px;line-height:10px;white-space:nowrap;font-size:6.6px;color:#333;font-weight:bold">早餐</div>
<div style="position:absolute;left:0;width:102px;text-align:center;top:58.9px;line-height:10px;white-space:nowrap;color:#222;font-weight:bold"><span style="font-size:6px;margin-right:0.8px">¥</span><span style="font-size:8.5px">0.01</span></div>
<div style="position:absolute;left:0;width:102px;text-align:center;top:72.7px;line-height:10px;white-space:nowrap;font-size:7.3px;color:#888;font-weight:normal">小学 5-6 年级餐标</div>
<svg style="left:403.2px;top:61.8px" width="8.2" height="8.2" viewBox="0 0 8 8"><circle cx="4" cy="4" r="4" fill="#1b63d6"/><path d="M4 1.8v4.4M1.8 4h4.4" stroke="#fff" stroke-width="1.3"/></svg>
<div style="position:absolute;left:415.5px;top:61.5px;line-height:10px;font-size:7px;color:#1e58b8;white-space:nowrap">添加菜品</div>
<div style="position:absolute;left:0;top:124.2px;width:745px;height:1px;background:#f0f0f0"></div>
<div style="position:absolute;left:111px;top:94.0px;width:625px;height:24.1px;background:#f3f3f3;border-radius:1px"></div>
<div style="position:absolute;left:0;width:102px;text-align:center;top:95.5px;line-height:10px;white-space:nowrap;font-size:6.6px;color:#333;font-weight:bold">早餐</div>
<div style="position:absolute;left:0;width:102px;text-align:center;top:104.8px;line-height:10px;white-space:nowrap;color:#222;font-weight:bold"><span style="font-size:6px;margin-right:0.8px">¥</span><span style="font-size:8.5px">6</span></div>
<svg style="left:403.2px;top:102.0px" width="8.2" height="8.2" viewBox="0 0 8 8"><circle cx="4" cy="4" r="4" fill="#1b63d6"/><path d="M4 1.8v4.4M1.8 4h4.4" stroke="#fff" stroke-width="1.3"/></svg>
<div style="position:absolute;left:415.5px;top:101.6px;line-height:10px;font-size:7px;color:#1e58b8;white-space:nowrap">添加菜品</div>
<div style="position:absolute;left:0;top:161.8px;width:745px;height:1px;background:#f0f0f0"></div>
<div style="position:absolute;left:111px;top:131.3px;width:625px;height:24.4px;background:#f3f3f3;border-radius:1px"></div>
<div style="position:absolute;left:0;width:102px;text-align:center;top:132.9px;line-height:10px;white-space:nowrap;font-size:6.6px;color:#333;font-weight:bold">早餐</div>
<div style="position:absolute;left:0;width:102px;text-align:center;top:142.3px;line-height:10px;white-space:nowrap;color:#222;font-weight:bold"><span style="font-size:6px;margin-right:0.8px">¥</span><span style="font-size:8.5px">1</span></div>
<svg style="left:403.2px;top:139.4px" width="8.2" height="8.2" viewBox="0 0 8 8"><circle cx="4" cy="4" r="4" fill="#1b63d6"/><path d="M4 1.8v4.4M1.8 4h4.4" stroke="#fff" stroke-width="1.3"/></svg>
<div style="position:absolute;left:415.5px;top:139.1px;line-height:10px;font-size:7px;color:#1e58b8;white-space:nowrap">添加菜品</div>
<div style="position:absolute;left:0;top:199.0px;width:745px;height:1px;background:#f0f0f0"></div>
<div style="position:absolute;left:111px;top:168.9px;width:625px;height:24.0px;background:#f3f3f3;border-radius:1px"></div>
<div style="position:absolute;left:0;width:102px;text-align:center;top:170.3px;line-height:10px;white-space:nowrap;font-size:6.6px;color:#333;font-weight:bold">早餐</div>
<div style="position:absolute;left:0;width:102px;text-align:center;top:179.7px;line-height:10px;white-space:nowrap;color:#222;font-weight:bold"><span style="font-size:6px;margin-right:0.8px">¥</span><span style="font-size:8.5px">0.01</span></div>
<svg style="left:403.2px;top:176.8px" width="8.2" height="8.2" viewBox="0 0 8 8"><circle cx="4" cy="4" r="4" fill="#1b63d6"/><path d="M4 1.8v4.4M1.8 4h4.4" stroke="#fff" stroke-width="1.3"/></svg>
<div style="position:absolute;left:415.5px;top:176.5px;line-height:10px;font-size:7px;color:#1e58b8;white-space:nowrap">添加菜品</div>
<div style="position:absolute;left:0;top:236.7px;width:745px;height:1px;background:#f0f0f0"></div>
<div style="position:absolute;left:111px;top:206.1px;width:625px;height:24.5px;background:#f3f3f3;border-radius:1px"></div>
<div style="position:absolute;left:0;width:102px;text-align:center;top:207.8px;line-height:10px;white-space:nowrap;font-size:6.6px;color:#333;font-weight:bold">早餐</div>
<div style="position:absolute;left:0;width:102px;text-align:center;top:217.1px;line-height:10px;white-space:nowrap;color:#222;font-weight:bold"><span style="font-size:6px;margin-right:0.8px">¥</span><span style="font-size:8.5px">0.05</span></div>
<svg style="left:403.2px;top:214.2px" width="8.2" height="8.2" viewBox="0 0 8 8"><circle cx="4" cy="4" r="4" fill="#1b63d6"/><path d="M4 1.8v4.4M1.8 4h4.4" stroke="#fff" stroke-width="1.3"/></svg>
<div style="position:absolute;left:415.5px;top:213.9px;line-height:10px;font-size:7px;color:#1e58b8;white-space:nowrap">添加菜品</div>
<div style="position:absolute;left:0;top:274.7px;width:745px;height:1px;background:#f0f0f0"></div>
<div style="position:absolute;left:111px;top:243.8px;width:625px;height:24.8px;background:#f3f3f3;border-radius:1px"></div>
<div style="position:absolute;left:0;width:102px;text-align:center;top:245.6px;line-height:10px;white-space:nowrap;font-size:6.6px;color:#333;font-weight:bold">早餐</div>
<div style="position:absolute;left:0;width:102px;text-align:center;top:255.0px;line-height:10px;white-space:nowrap;color:#222;font-weight:bold"><span style="font-size:6px;margin-right:0.8px">¥</span><span style="font-size:8.5px">10</span></div>
<svg style="left:403.2px;top:252.1px" width="8.2" height="8.2" viewBox="0 0 8 8"><circle cx="4" cy="4" r="4" fill="#1b63d6"/><path d="M4 1.8v4.4M1.8 4h4.4" stroke="#fff" stroke-width="1.3"/></svg>
<div style="position:absolute;left:415.5px;top:251.8px;line-height:10px;font-size:7px;color:#1e58b8;white-space:nowrap">添加菜品</div>
<div style="position:absolute;left:0;top:317.9px;width:745px;height:1px;background:#f0f0f0"></div>
<div style="position:absolute;left:111px;top:281.8px;width:625px;height:30.0px;background:#f3f3f3;border-radius:1px"></div>
<div style="position:absolute;left:0;width:102px;text-align:center;top:280.6px;line-height:10px;white-space:nowrap;font-size:6.6px;color:#333;font-weight:bold">早餐</div>
<div style="position:absolute;left:0;width:102px;text-align:center;top:289.8px;line-height:10px;white-space:nowrap;color:#222;font-weight:bold"><span style="font-size:6px;margin-right:0.8px">¥</span><span style="font-size:8.5px">300</span></div>
<div style="position:absolute;left:0;width:102px;text-align:center;top:303.6px;line-height:10px;white-space:nowrap;font-size:7.3px;color:#888;font-weight:normal">都给我吃好点</div>
<svg style="left:403.2px;top:292.7px" width="8.2" height="8.2" viewBox="0 0 8 8"><circle cx="4" cy="4" r="4" fill="#1b63d6"/><path d="M4 1.8v4.4M1.8 4h4.4" stroke="#fff" stroke-width="1.3"/></svg>
<div style="position:absolute;left:415.5px;top:292.4px;line-height:10px;font-size:7px;color:#1e58b8;white-space:nowrap">添加菜品</div>
<div style="position:absolute;left:0;top:354.9px;width:745px;height:1px;background:#f0f0f0"></div>
<div style="position:absolute;left:111px;top:325.0px;width:625px;height:23.8px;background:#f3f3f3;border-radius:1px"></div>
<div style="position:absolute;left:0;width:102px;text-align:center;top:326.3px;line-height:10px;white-space:nowrap;font-size:6.6px;color:#333;font-weight:bold">午餐</div>
<div style="position:absolute;left:0;width:102px;text-align:center;top:335.7px;line-height:10px;white-space:nowrap;color:#222;font-weight:bold"><span style="font-size:6px;margin-right:0.8px">¥</span><span style="font-size:8.5px">0.04</span></div>
<svg style="left:403.2px;top:332.8px" width="8.2" height="8.2" viewBox="0 0 8 8"><circle cx="4" cy="4" r="4" fill="#1b63d6"/><path d="M4 1.8v4.4M1.8 4h4.4" stroke="#fff" stroke-width="1.3"/></svg>
<div style="position:absolute;left:415.5px;top:332.5px;line-height:10px;font-size:7px;color:#1e58b8;white-space:nowrap">添加菜品</div>
<div style="position:absolute;left:0;top:392.0px;width:745px;height:1px;background:#f0f0f0"></div>
<div style="position:absolute;left:111px;top:362.0px;width:625px;height:23.9px;background:#f3f3f3;border-radius:1px"></div>
<div style="position:absolute;left:0;width:102px;text-align:center;top:363.3px;line-height:10px;white-space:nowrap;font-size:6.6px;color:#333;font-weight:bold">午餐</div>
<div style="position:absolute;left:0;width:102px;text-align:center;top:372.8px;line-height:10px;white-space:nowrap;color:#222;font-weight:bold"><span style="font-size:6px;margin-right:0.8px">¥</span><span style="font-size:8.5px">15</span></div>
<svg style="left:403.2px;top:369.8px" width="8.2" height="8.2" viewBox="0 0 8 8"><circle cx="4" cy="4" r="4" fill="#1b63d6"/><path d="M4 1.8v4.4M1.8 4h4.4" stroke="#fff" stroke-width="1.3"/></svg>
<div style="position:absolute;left:415.5px;top:369.6px;line-height:10px;font-size:7px;color:#1e58b8;white-space:nowrap">添加菜品</div>
</div>
<div style="position:absolute;left:318px;top:151px;width:1px;height:373px;background:#efefef"></div>
<div style="position:absolute;left:961px;top:151px;width:8px;height:373px;background:#f1f1f1"></div>
<div style="position:absolute;left:961px;top:160px;width:8px;height:221.6px;background:#c6c6c6"></div>
<svg style="left:962.5px;top:153.5px" width="5" height="4" viewBox="0 0 5 4"><path d="M0.5 3L2.5 1 4.5 3" fill="none" stroke="#555" stroke-width="0.9"/></svg>
<svg style="left:962.5px;top:517px" width="5" height="4" viewBox="0 0 5 4"><path d="M0.5 1L2.5 3 4.5 1" fill="none" stroke="#555" stroke-width="0.9"/></svg>
<div style="position:absolute;left:953px;top:355.6px;width:30px;height:23px;background:#dde8fa;border-radius:4px 0 0 4px"></div>
<svg style="left:961px;top:358.5px" width="9" height="8" viewBox="0 0 9 8"><path d="M4.5 0.5L8.3 2.3 4.5 4.1 0.7 2.3z" fill="none" stroke="#2b63c6" stroke-width="0.8"/><path d="M0.7 4.1L4.5 5.9 8.3 4.1M0.7 5.7L4.5 7.5 8.3 5.7" fill="none" stroke="#2b63c6" stroke-width="0.8"/></svg>
<div style="position:absolute;left:765px;width:400px;text-align:center;top:368.80px;line-height:8.40px;font-size:6px;color:#2b63c6;font-weight:normal;white-space:nowrap;">任务</div>
<div style="position:absolute;left:961.7px;top:428.7px;width:20px;height:51.7px;background:#0b6cf6"></div>
<svg style="left:965.8px;top:434.2px" width="8" height="8" viewBox="0 0 8 8"><circle cx="4" cy="4" r="3.5" fill="none" stroke="#fff" stroke-width="0.7"/><path d="M2.6 4h2.8" stroke="#fff" stroke-width="0.6"/></svg>
<div style="position:absolute;left:769.6px;width:400px;text-align:center;top:445.28px;line-height:7.84px;font-size:5.6px;color:#fff;font-weight:bold;white-space:nowrap;">联</div>
<div style="position:absolute;left:769.6px;width:400px;text-align:center;top:454.28px;line-height:7.84px;font-size:5.6px;color:#fff;font-weight:bold;white-space:nowrap;">系</div>
<div style="position:absolute;left:769.6px;width:400px;text-align:center;top:463.28px;line-height:7.84px;font-size:5.6px;color:#fff;font-weight:bold;white-space:nowrap;">客</div>
<div style="position:absolute;left:769.6px;width:400px;text-align:center;top:472.28px;line-height:7.84px;font-size:5.6px;color:#fff;font-weight:bold;white-space:nowrap;">服</div>
</div></body></html>
